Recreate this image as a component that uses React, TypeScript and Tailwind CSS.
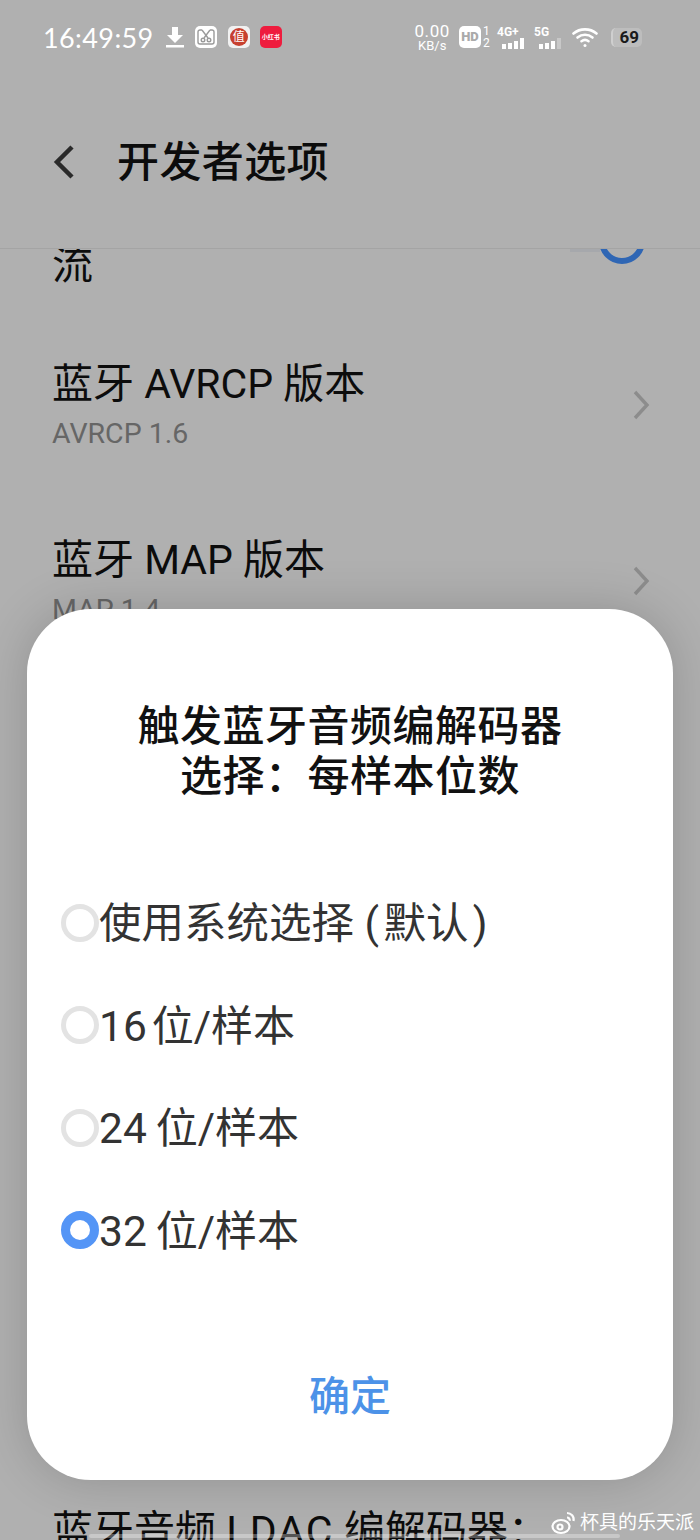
import React from "react";

const font = "font-['Roboto','Noto_Sans_CJK_SC',sans-serif]";

const options = [
  { num: "", label: "使用系统选择 (\u200a默认\u200a)", gap: "", selected: false },
  { num: "16", label: "位/样本", gap: "ml-[5px] text-[42px]", selected: false },
  { num: "24", label: "位/样本", gap: "ml-[9px] text-[42px]", selected: false },
  { num: "32", label: "位/样本", gap: "ml-[9px] text-[42px]", selected: true },
];

function ListRow({ title, sub }: { title: string; sub: string }) {
  return (
    <div className="h-[176px] flex items-start justify-between pl-[52px] pr-[50px] pt-[56px]">
      <div>
        <div className="text-[41px] leading-[50px] text-[#0c0c0c]">{title}</div>
        <div className="text-[28.500px] leading-[40px] mt-[5px] text-[#666]">{sub}</div>
      </div>
      <svg className="mt-[31px]" width="18" height="30" viewBox="0 0 18 30" fill="none" stroke="#8c8c8c" strokeWidth="3.400">
        <path d="M3 2l12 13L3 28" />
      </svg>
    </div>
  );
}

function Signal({ label, dim }: { label: string; dim?: boolean }) {
  return (
    <div className="w-[29px] flex flex-col">
      <span className="text-[12px] leading-[12px] font-bold font-['Roboto',sans-serif]">{label}</span>
      <div className="flex items-end gap-[2px] h-[11px] ml-[5px]">
        <i className="w-[4px] h-[5px] bg-white" />
        <i className="w-[4px] h-[6px] bg-white" />
        <i className="w-[4px] h-[8px] bg-white" />
        <i className={dim ? "w-[4px] h-[11px] bg-white/30" : "w-[4px] h-[11px] bg-white"} />
      </div>
    </div>
  );
}

function StatusBar() {
  return (
    <div className="h-[74px] flex items-center justify-between pl-[43px] pr-[58px] text-white">
      <div className="flex items-center">
        <span className="text-[27px] leading-none tracking-[0.4px] font-['Lato',sans-serif]">16:49:59</span>
        <svg className="ml-[11px]" width="20" height="22" viewBox="0 0 20 22" fill="white">
          <path d="M7 1h6v8h5l-8 8-8-8h5z" />
          <rect x="1" y="19" width="18" height="2.500" />
        </svg>
        <div className="ml-[10px] w-[22px] h-[22px] rounded-[5px] bg-white flex items-center justify-center">
          <svg width="18" height="16" viewBox="0 0 18 16" fill="none" stroke="#9a9a9a" strokeWidth="1.400">
            <path d="M5 1H3a2 2 0 0 0-2 2v10a2 2 0 0 0 2 2h12a2 2 0 0 0 2-2V3a2 2 0 0 0-2-2h-2" />
            <path d="M5 1l6 8M13 1L7 9" />
            <circle cx="6" cy="11" r="1.800" />
            <circle cx="12" cy="11" r="1.800" />
          </svg>
        </div>
        <div className="ml-[11px] w-[22px] h-[22px] rounded-[5px] bg-[#f1f1f1] flex items-center justify-center">
          <div className="w-[18px] h-[18px] rounded-full bg-[#c7402f] text-white text-[12px] leading-[18px] text-center">值</div>
        </div>
        <div className="ml-[10px] w-[22px] h-[22px] rounded-[5px] bg-[#ee1c3e] text-white text-[6px] leading-[22px] text-center font-bold whitespace-nowrap overflow-hidden">小红书</div>
      </div>
      <div className="flex items-center">
        <div className="flex flex-col items-center font-['Roboto',sans-serif]">
          <span className="text-[17px] leading-[16px] tracking-[0.6px]">0.00</span>
          <span className="text-[13px] leading-[13px]">KB/s</span>
        </div>
        <div className="ml-[9px] w-[22px] h-[22px] rounded-[5px] bg-white text-[#aaa] text-[13px] leading-[22px] text-center font-black font-['Roboto',sans-serif]">HD</div>
        <div className="ml-[2px] w-[8px] flex flex-col text-[12px] leading-[12px] font-['Roboto',sans-serif]">
          <span>1</span>
          <span>2</span>
        </div>
        <div className="ml-[6px]">
          <Signal label="4G+" />
        </div>
        <div className="ml-[8px]">
          <Signal label="5G" dim />
        </div>
        <svg className="ml-[9px]" width="26" height="22" viewBox="0 0 26 22" fill="none" stroke="white" strokeWidth="2.600" strokeLinecap="round">
          <path d="M1.500 7.500C8 2 18 2 24.500 7.500" />
          <path d="M5.500 11.500c4.500-3.600 10.500-3.600 15 0" />
          <path d="M9.500 15.200c2.200-1.600 4.800-1.600 7 0" />
          <circle cx="13" cy="19.500" r="1.500" fill="white" stroke="none" />
        </svg>
        <div className="ml-[13px] w-[31px] h-[19px] rounded-[5px] border-l-2 border-[#cfcfcf] bg-[#bdbdbd] text-[#1a1a1a] text-[17px] leading-[19px] text-right pr-[3px] font-bold font-['Roboto',sans-serif]">69</div>
      </div>
    </div>
  );
}

export default function App() {
  return (
    <div className={`relative w-[700px] h-[1540px] overflow-hidden bg-[#b0b0b0] ${font}`}>
      <StatusBar />
      <header className="h-[175px] border-b border-[#a4a4a4] flex items-start pl-[53px] pt-[65px]">
        <svg className="mt-[6px]" width="22" height="34" viewBox="0 0 22 34" fill="none" stroke="#2a2a2a" strokeWidth="4.500">
          <path d="M19 2L4 17l15 15" />
        </svg>
        <h1 className="ml-[42px] mt-[1px] text-[42px] leading-[46px] tracking-[0.4px] font-medium text-[#0c0c0c]">开发者选项</h1>
      </header>

      {/* 列表在弹窗后面 */}
      <div className="relative h-[1291px] overflow-hidden">
        <div className="h-[62px] pl-[52px]">
          <div className="text-[41px] leading-[48px] -mt-[8px] text-[#0c0c0c]">流</div>
        </div>
        <div className="absolute left-[570px] top-0 w-[30px] h-[3px] bg-[#a6a8ac]" />
        <div className="absolute left-[599px] -top-[31px] w-[46px] h-[46px] rounded-full border-[6px] border-[#2f66b4]" />
        <ListRow title="蓝牙 AVRCP 版本" sub="AVRCP 1.6" />
        <ListRow title="蓝牙 MAP 版本" sub="MAP 1.4" />
        <div className="absolute left-[52px] top-[1257px] text-[41px] leading-[50px] text-[#0c0c0c] whitespace-nowrap">
          蓝牙音频 <span className="tracking-[1.500px]">LDAC</span> 编解码器：
        </div>
      </div>

      {/* 底部小条和水印 */}
      <div className="absolute left-[89px] right-[80px] top-[1534px] h-[4px] rounded-full bg-white/30" />
      <div className="absolute right-[6px] top-[1509px] flex items-center text-[19px] leading-[28px] text-white">
        <svg width="25" height="24" viewBox="0 0 25 24" fill="none" stroke="white" strokeWidth="2.200">
          <ellipse cx="10" cy="15.500" rx="8.500" ry="6.500" />
          <circle cx="9" cy="16" r="2.500" />
          <path d="M16 2c4 0 7.500 3.500 6.500 8M16 6.500c1.800 0 3 1.500 2.700 3.200" />
        </svg>
        <span className="ml-[4px]">杯具的乐天派</span>
      </div>

      <div className="absolute left-[27px] top-[609px] w-[646px] h-[871px] rounded-[64px] bg-white shadow-[0_0_50px_rgba(0,0,0,0.18)] flex flex-col">
        <h2 className="pt-[93px] text-center text-[42px] leading-[50px] font-medium text-[#111] tracking-[0.5px]">
          触发蓝牙音频编解码器
          <br />
          选择：每样本位数
        </h2>
        <div className="mt-[71px] flex flex-col pl-[34px]">
          {options.map((o) => (
            <div key={o.label + o.num} className="h-[102.500px] flex items-center">
              <span
                className={
                  o.selected
                    ? "w-[38px] h-[38px] mb-[3px] rounded-full border-[9px] border-[#5495f6]"
                    : "w-[38px] h-[38px] mb-[3px] rounded-full border-[5px] border-[#e3e3e3]"
                }
              />
              <span className="text-[42.500px] leading-[50px] text-[#333] whitespace-nowrap">
                {o.num}
                <span className={o.gap}>{o.label}</span>
              </span>
            </div>
          ))}
        </div>
        <div className="mt-auto pb-[58px] text-center text-[41px] leading-[50px] font-medium text-[#4c92e8]">确定</div>
      </div>
    </div>
  );
}
